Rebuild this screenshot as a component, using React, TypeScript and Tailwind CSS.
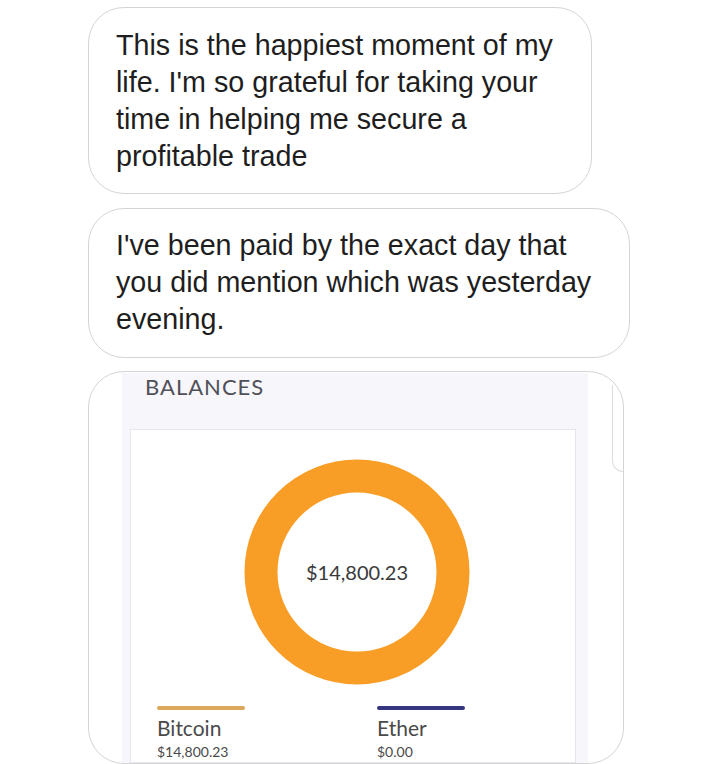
import React from 'react';

const Bubble: React.FC<{ width: string; lines: string[] }> = ({ width, lines }) => (
  <div
    className={`${width} shrink-0 rounded-[36px] border border-[#d4d4d4] bg-white px-[27px] py-[18.5px] text-[28.7px] leading-[37px] text-[#1e1e1e]`}
    style={{ fontFamily: '"Liberation Sans", Arial, sans-serif' }}
  >
    {lines.map((line, i) => (
      <div key={i} className="whitespace-nowrap">
        {line}
      </div>
    ))}
  </div>
);

const Donut: React.FC = () => (
  <div className="relative h-[226px] w-[226px]">
    <svg width="226" height="226" viewBox="0 0 226 226">
      <circle cx="113" cy="113" r="96" fill="none" stroke="#f89d26" strokeWidth="33" />
    </svg>
    <div className="absolute inset-0 flex items-center justify-center text-[20px] text-[#3a3a3a]">
      $14,800.23
    </div>
  </div>
);

const Legend: React.FC<{ name: string; value: string; color: string }> = ({ name, value, color }) => (
  <div className="flex flex-col">
    <div className={`h-[4px] w-[88px] rounded-full ${color}`} />
    <div className="mt-[5px] text-[21px] leading-[26px] text-[#4a4a4a]">{name}</div>
    <div className="mt-[1px] text-[14px] leading-[20px] text-[#4a4a4a]">{value}</div>
  </div>
);

const App: React.FC = () => {
  return (
    <div className="relative flex h-[764px] w-[720px] flex-col gap-[13.5px] overflow-hidden bg-white pl-[88px] pt-[7px]">
      <Bubble
        width="w-[504px]"
        lines={[
          'This is the happiest moment of my',
          "life. I'm so grateful for taking your",
          'time in helping me secure a',
          'profitable trade',
        ]}
      />
      <Bubble
        width="w-[542px]"
        lines={[
          "I've been paid by the exact day that",
          'you did mention which was yesterday',
          'evening.',
        ]}
      />
      <div className="flex h-[393px] w-[536px] shrink-0 overflow-hidden rounded-[36px] border border-[#d4d4d4] bg-white">
        <div
          className="ml-[33px] mt-[1px] flex w-[466px] flex-col bg-[#f6f6fb]"
          style={{ fontFamily: 'Lato, "Open Sans", sans-serif' }}
        >
          <div className="h-[56px] pl-[23px] pt-[1px] text-[22px] leading-[26px] tracking-[1px] text-[#505058]">
            BALANCES
          </div>
          <div className="ml-[8px] flex w-[446px] flex-1 flex-col border border-[#e6e6ee] bg-white">
            <div className="mt-[29px] flex justify-center pl-[8px]">
              <Donut />
            </div>
            <div className="mt-[21px] grid grid-cols-[220px_1fr] pl-[26px]">
              <Legend name="Bitcoin" value="$14,800.23" color="bg-[#dba85c]" />
              <Legend name="Ether" value="$0.00" color="bg-[#36357f]" />
            </div>
          </div>
        </div>
      </div>
      <div className="absolute left-[612px] top-[385px] h-[87px] w-[11px] rounded-bl-[11px] border-b border-l border-[#dcdce2]" />
    </div>
  );
};

export default App;
